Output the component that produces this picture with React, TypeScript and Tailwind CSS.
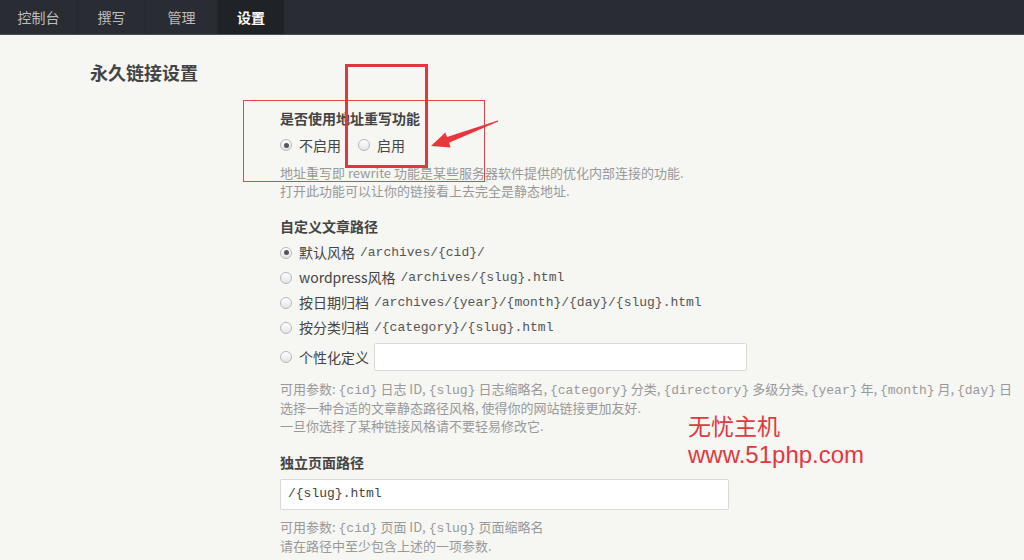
import React from "react";

const cjk = "font-['Microsoft_YaHei','Noto_Sans_CJK_SC',sans-serif]";
const mono = "font-['Liberation_Mono','Noto_Sans_CJK_SC',monospace]";

function Radio({ checked }: { checked?: boolean }) {
  return (
    <span className="relative inline-flex h-[12px] w-[12px] shrink-0 items-center justify-center rounded-full border border-[#b8b8b8] bg-gradient-to-b from-white to-[#e4e4e4]">
      {checked && <span className="h-[5px] w-[5px] rounded-full bg-[#555]" />}
    </span>
  );
}

function Option({ checked, label, path }: { checked?: boolean; label: string; path?: string }) {
  return (
    <div className="flex h-[25px] items-center">
      <Radio checked={checked} />
      <span className="ml-[7px] text-[14px] text-[#444]">{label}</span>
      {path && <span className={`${mono} ml-[5px] text-[13px] text-[#555]`}>{path}</span>}
    </div>
  );
}

function C({ children }: { children: React.ReactNode }) {
  return <span className={`${mono} text-[13px] leading-none text-[#999]`}>{children}</span>;
}

export default function App() {
  return (
    <div className={`${cjk} relative min-h-[560px] w-[1024px] overflow-hidden bg-[#f6f6f3]`}>
      <nav className="flex h-[35px] border-b border-[#4a4d52] bg-[#292d33] text-[14px] text-[#bdbdbd]">
        <div className="flex w-[78px] items-center justify-center border-r border-[#24272c]">控制台</div>
        <div className="flex w-[68px] items-center justify-center border-r border-[#24272c]">撰写</div>
        <div className="flex w-[72px] items-center justify-center border-r border-[#24272c]">管理</div>
        <div className="flex w-[66px] items-center justify-center bg-[#1f2226] font-bold text-white">设置</div>
      </nav>

      <h2 className="ml-[90px] pt-[23px] text-[18px] leading-[28px] font-bold text-[#444]">永久链接设置</h2>

      <div className="ml-[280px] mt-[22px]">
        <div className="text-[14px] leading-[20px] font-bold text-[#444]">是否使用地址重写功能</div>
        <div className="mt-[7px] flex h-[20px] items-center text-[14px] text-[#444]">
          <Radio checked />
          <span className="ml-[7px]">不启用</span>
          <span className="ml-[17px]">
            <Radio />
          </span>
          <span className="ml-[7px]">启用</span>
        </div>
        <div className="mt-[9px] text-[13px] leading-[18px] text-[#999]">
          <p>地址重写即 rewrite 功能是某些服务器软件提供的优化内部连接的功能.</p>
          <p>打开此功能可以让你的链接看上去完全是静态地址.</p>
        </div>

        <div className="mt-[16px] text-[14px] leading-[20px] font-bold text-[#444]">自定义文章路径</div>
        <div className="mt-[4px]">
          <Option checked label="默认风格" path="/archives/{cid}/" />
          <Option label="wordpress风格" path="/archives/{slug}.html" />
          <Option label="按日期归档" path="/archives/{year}/{month}/{day}/{slug}.html" />
          <Option label="按分类归档" path="/{category}/{slug}.html" />
          <div className="mt-[2px] flex h-[30px] items-center">
            <Radio />
            <span className="ml-[7px] text-[14px] text-[#444]">个性化定义</span>
            <input className="ml-[5px] h-[28px] w-[373px] rounded-[2px] border border-[#d9d9d6] bg-white outline-none" />
          </div>
        </div>
        <div className="mt-[8px] text-[13px] leading-[18.5px] text-[#999]">
          <p className="whitespace-nowrap">
            可用参数: <C>{"{cid}"}</C> 日志 ID, <C>{"{slug}"}</C> 日志缩略名, <C>{"{category}"}</C> 分类, <C>{"{directory}"}</C> 多级分类, <C>{"{year}"}</C> 年, <C>{"{month}"}</C> 月, <C>{"{day}"}</C> 日
          </p>
          <p>选择一种合适的文章静态路径风格, 使得你的网站链接更加友好.</p>
          <p>一旦你选择了某种链接风格请不要轻易修改它.</p>
        </div>

        <div className="mt-[16px] text-[14px] leading-[20px] font-bold text-[#444]">独立页面路径</div>
        <div className={`${mono} mt-[7px] flex h-[31px] w-[449px] items-center rounded-[2px] border border-[#d9d9d6] bg-white px-[7px] text-[13px] text-[#444]`}>
          /{"{slug}"}.html
        </div>
        <div className="mt-[7px] text-[13px] leading-[19px] text-[#999]">
          <p>
            可用参数: <C>{"{cid}"}</C> 页面 ID, <C>{"{slug}"}</C> 页面缩略名
          </p>
          <p>请在路径中至少包含上述的一项参数.</p>
        </div>
      </div>

      {/* annotations */}
      <div className="pointer-events-none absolute left-[243px] top-[100px] h-[82px] w-[242px] border border-[#e0454b]" />
      <div className="pointer-events-none absolute left-[345px] top-[64px] h-[104px] w-[83px] border-[3px] border-[#e0383e]" />
      <svg className="pointer-events-none absolute left-0 top-0" width="1024" height="560">
        <polygon
          points="431,146 445.3,132.4 447,137.1 497.8,120.6 498.2,121.4 449,142.7 450.7,147.4"
          fill="#e9363d"
        />
      </svg>
      <div className="pointer-events-none absolute left-[688px] top-[410px] text-[23px] leading-[30px] text-[#e2383f]">无忧主机</div>
      <div className="pointer-events-none absolute left-[688px] top-[440px] font-['Liberation_Sans',Arial,sans-serif] text-[24px] leading-[30px] text-[#e2383f]">
        www.51php.com
      </div>
    </div>
  );
}
